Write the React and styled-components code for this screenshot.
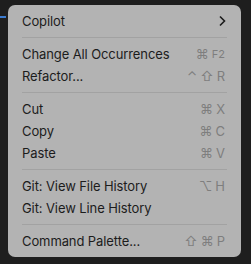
import styled, { createGlobalStyle } from 'styled-components'

const GlobalStyle = createGlobalStyle`
  html, body {
    margin: 0;
    background: #1e1e1e;
    height: 100%;
  }
`

const items = [
  { label: 'Copilot', submenu: true },
  'sep',
  { label: 'Change All Occurrences', keys: '⌘', extra: 'F2' },
  { label: 'Refactor...', keys: '⌃⇧R' },
  'sep',
  { label: 'Cut', keys: '⌘X' },
  { label: 'Copy', keys: '⌘C' },
  { label: 'Paste', keys: '⌘V' },
  'sep',
  { label: 'Git: View File History', keys: '⌥H' },
  { label: 'Git: View Line History' },
  'sep',
  { label: 'Command Palette...', keys: '⇧⌘P' }
]

const App = () => {
  return (
    <>
      <GlobalStyle />
      <Page>
        <TabMark />
        <Menu>
          {items.map((item, i) =>
            item === 'sep' ? (
              <Separator key={i} />
            ) : (
              <Row key={i}>
                <Label>{item.label}</Label>
                {item.submenu && (
                  <Chevron viewBox="0 0 8 12" width="8" height="12">
                    <path d="M2 1.5 L6.5 6 L2 10.5" fill="none" stroke="#1c1c1c" strokeWidth="1.6" />
                  </Chevron>
                )}
                {item.keys && (
                  <Keys>
                    {item.keys.split('').map((k, j) => (
                      <Key key={j}>{k}</Key>
                    ))}
                    {item.extra && <Small>{item.extra}</Small>}
                  </Keys>
                )}
              </Row>
            )
          )}
        </Menu>
      </Page>
    </>
  )
}

export default App

const Page = styled.div`
  position: relative;
  width: 251px;
  height: 264px;
  padding: 5px 10px 0 8px;
  box-sizing: border-box;
  background: #1e1e1e;
`
const TabMark = styled.div`
  position: absolute;
  left: 0;
  top: 16px;
  width: 6px;
  height: 2px;
  background: #3b7bd0;
`
const Menu = styled.div`
  width: 233px;
  height: 252px;
  box-sizing: border-box;
  padding: 5px 0;
  background: #b3b3b3;
  border-radius: 7px;
  font-family: Inter, 'Noto Sans', sans-serif;
  font-size: 13px;
  color: #1c1c1c;
`
const Row = styled.div`
  display: flex;
  align-items: center;
  justify-content: space-between;
  height: 22px;
  padding: 0 16px 0 14px;
`
const Label = styled.span`
  letter-spacing: -0.1px;
`
const Chevron = styled.svg`
  margin-right: -1px;
`
const Keys = styled.span`
  display: flex;
  align-items: center;
  gap: 3px;
  color: #7e7e7e;
`
const Key = styled.span`
  font-size: 13px;
`
const Small = styled.span`
  font-size: 11px;
`
const Separator = styled.div`
  height: 1px;
  margin: 5px 14px;
  background: #a2a2a2;
`
